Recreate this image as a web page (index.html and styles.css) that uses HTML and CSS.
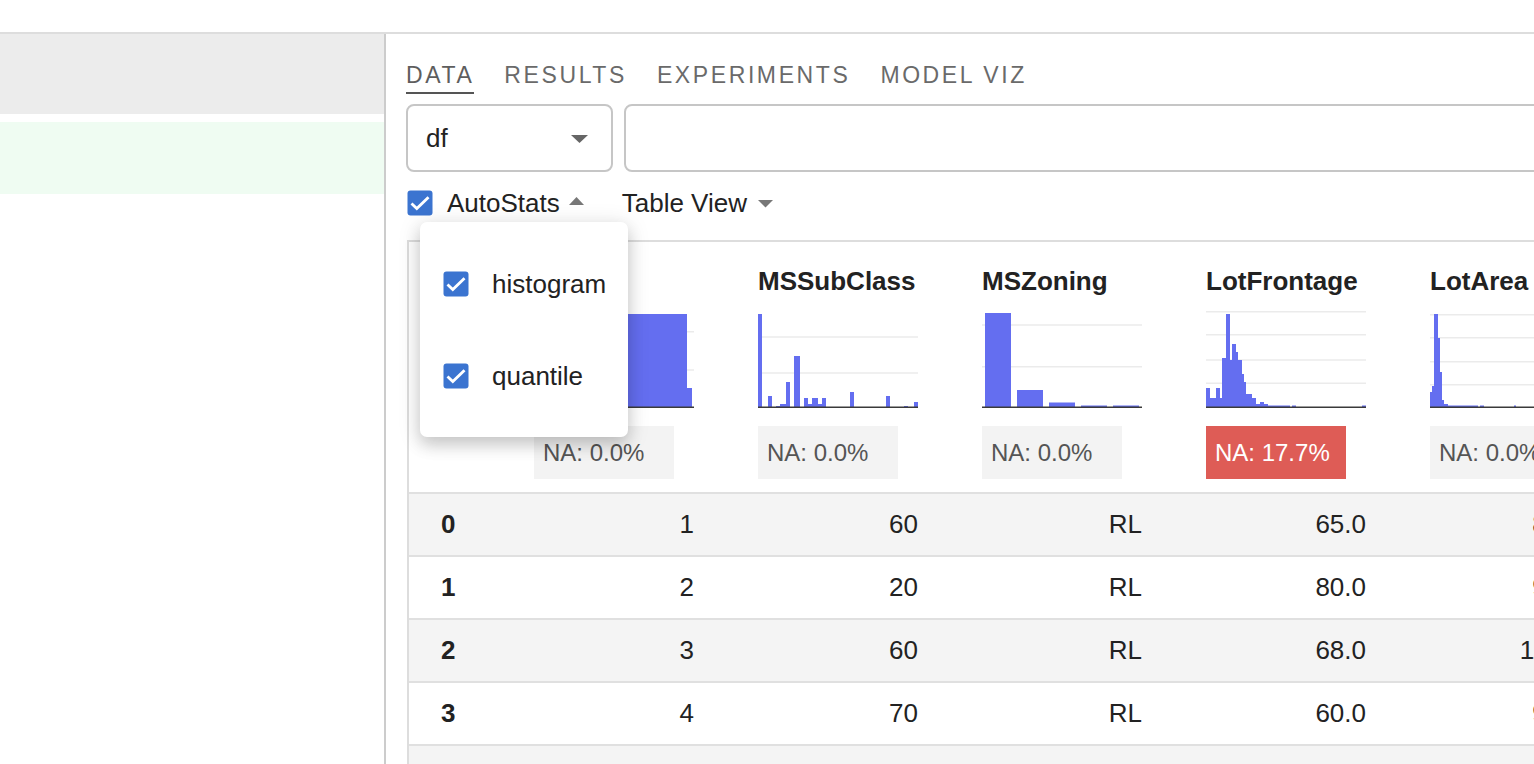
FILE: index.html
```html
<!DOCTYPE html>
<html>
<head>
<meta charset="utf-8">
<link rel="stylesheet" href="styles.css">
</head>
<body>
<div class="topbar"></div>
<div class="main">
  <aside class="left">
    <div class="left-head"></div>
    <div class="left-row"></div>
  </aside>
  <section class="right">
    <nav class="tabs">
      <span class="tab active">DATA</span>
      <span class="tab">RESULTS</span>
      <span class="tab">EXPERIMENTS</span>
      <span class="tab">MODEL VIZ</span>
    </nav>
    <div class="inputs">
      <div class="select">
        <span>df</span>
        <svg class="caret-lg" width="17" height="8" viewBox="0 0 17 8"><polygon points="0,0 17,0 8.5,8" fill="#666"/></svg>
      </div>
      <div class="textbox"></div>
    </div>
    <div class="controls">
      <svg class="cb" width="26" height="26" viewBox="0 0 26 26"><rect x="0.5" y="0.5" width="25" height="25" rx="3" fill="#3b74d0"/><path d="M4.5 13.5 L9.8 18.6 L21.5 7.2" fill="none" stroke="#fff" stroke-width="2.8"/></svg>
      <span class="ctl-label">AutoStats</span>
      <svg class="caret-up" width="15" height="8" viewBox="0 0 15 8"><polygon points="0,8 15,8 7.5,0" fill="#777"/></svg>
      <span class="ctl-label view">Table View</span>
      <svg class="caret-down" width="15" height="8" viewBox="0 0 15 8"><polygon points="0,0 15,0 7.5,7.5" fill="#777"/></svg>
      <div class="popup">
        <div class="pitem">
          <svg width="26" height="26" viewBox="0 0 26 26"><rect x="0.5" y="0.5" width="25" height="25" rx="3" fill="#3b74d0"/><path d="M4.5 13.5 L9.8 18.6 L21.5 7.2" fill="none" stroke="#fff" stroke-width="2.8"/></svg>
          <span>histogram</span>
        </div>
        <div class="pitem">
          <svg width="26" height="26" viewBox="0 0 26 26"><rect x="0.5" y="0.5" width="25" height="25" rx="3" fill="#3b74d0"/><path d="M4.5 13.5 L9.8 18.6 L21.5 7.2" fill="none" stroke="#fff" stroke-width="2.8"/></svg>
          <span>quantile</span>
        </div>
      </div>
    </div>
    <div class="tablewrap">
      <table class="grid">
        <colgroup><col class="c-idx"><col class="c-data"><col class="c-data"><col class="c-data"><col class="c-data"><col class="c-data"></colgroup>
        <thead>
          <tr>
            <th class="hidx"></th>
            <th class="hcol">
              <div class="htitle">Id</div>
              <svg class="hist" width="160" height="97" viewBox="0 0 160 97">
                <line x1="0" y1="20.7" x2="160" y2="20.7" class="gl"/>
                <line x1="0" y1="59" x2="160" y2="59" class="gl"/>
                <rect x="0" y="3" width="153" height="93" class="bar"/>
                <rect x="153" y="77" width="5" height="19" class="bar"/>
                <line x1="0" y1="96.3" x2="160" y2="96.3" class="ax"/>
              </svg>
              <div class="na">NA: 0.0%</div>
            </th>
            <th class="hcol">
              <div class="htitle">MSSubClass</div>
              <svg class="hist" width="160" height="97" viewBox="0 0 160 97">
                <line x1="0" y1="26" x2="160" y2="26" class="gl"/>
                <line x1="0" y1="62" x2="160" y2="62" class="gl"/>
                <rect x="0" y="3" width="4" height="93" class="bar"/>
                <rect x="10" y="85" width="4" height="11" class="bar"/>
                <rect x="18" y="95" width="4" height="1" class="bar"/>
                <rect x="22" y="93" width="6" height="3" class="bar"/>
                <rect x="28" y="71" width="4" height="25" class="bar"/>
                <rect x="36" y="45" width="6" height="51" class="bar"/>
                <rect x="46" y="87" width="4" height="9" class="bar"/>
                <rect x="50" y="93" width="4" height="3" class="bar"/>
                <rect x="54" y="87" width="6" height="9" class="bar"/>
                <rect x="60" y="93" width="4" height="3" class="bar"/>
                <rect x="64" y="87" width="4" height="9" class="bar"/>
                <rect x="92" y="81" width="4" height="15" class="bar"/>
                <rect x="128" y="85" width="4" height="11" class="bar"/>
                <rect x="146" y="95" width="4" height="1" class="bar"/>
                <rect x="156" y="91" width="4" height="5" class="bar"/>
                <line x1="0" y1="96.3" x2="160" y2="96.3" class="ax"/>
              </svg>
              <div class="na">NA: 0.0%</div>
            </th>
            <th class="hcol">
              <div class="htitle">MSZoning</div>
              <svg class="hist" width="160" height="97" viewBox="0 0 160 97">
                <line x1="0" y1="14" x2="160" y2="14" class="gl"/>
                <line x1="0" y1="55.7" x2="160" y2="55.7" class="gl"/>
                <rect x="3" y="2" width="26" height="94" class="bar"/>
                <rect x="35" y="79" width="26" height="17" class="bar"/>
                <rect x="67" y="91.5" width="26" height="4.5" class="bar"/>
                <rect x="99" y="94.5" width="26" height="1.5" class="bar"/>
                <rect x="131" y="94.5" width="26" height="1.5" class="bar"/>
                <line x1="0" y1="96.3" x2="160" y2="96.3" class="ax"/>
              </svg>
              <div class="na">NA: 0.0%</div>
            </th>
            <th class="hcol">
              <div class="htitle">LotFrontage</div>
              <svg class="hist" width="160" height="97" viewBox="0 0 160 97">
                <line x1="0" y1="0.7" x2="160" y2="0.7" class="gl"/>
                <line x1="0" y1="23.7" x2="160" y2="23.7" class="gl"/>
                <line x1="0" y1="49" x2="160" y2="49" class="gl"/>
                <line x1="0" y1="72.3" x2="160" y2="72.3" class="gl"/>
                <rect x="0" y="77" width="4" height="19" class="bar"/>
                <rect x="4" y="87" width="6" height="9" class="bar"/>
                <rect x="10" y="77" width="4" height="19" class="bar"/>
                <rect x="14" y="87" width="2" height="9" class="bar"/>
                <rect x="16" y="47" width="4" height="49" class="bar"/>
                <rect x="20" y="3" width="4" height="93" class="bar"/>
                <rect x="24" y="49" width="2" height="47" class="bar"/>
                <rect x="26" y="33" width="4" height="63" class="bar"/>
                <rect x="30" y="41" width="2" height="55" class="bar"/>
                <rect x="32" y="49" width="4" height="47" class="bar"/>
                <rect x="36" y="63" width="2" height="33" class="bar"/>
                <rect x="38" y="71" width="2" height="25" class="bar"/>
                <rect x="40" y="83" width="6" height="13" class="bar"/>
                <rect x="46" y="87" width="4" height="9" class="bar"/>
                <rect x="50" y="93" width="4" height="3" class="bar"/>
                <rect x="54" y="91" width="4" height="5" class="bar"/>
                <rect x="58" y="93" width="4" height="3" class="bar"/>
                <rect x="62" y="94.5" width="22" height="1.5" class="bar"/>
                <rect x="86" y="94.5" width="4" height="1.5" class="bar"/>
                <rect x="156" y="94.5" width="4" height="1.5" class="bar"/>
                <line x1="0" y1="96.3" x2="160" y2="96.3" class="ax"/>
              </svg>
              <div class="na bad">NA: 17.7%</div>
            </th>
            <th class="hcol">
              <div class="htitle">LotArea</div>
              <svg class="hist" width="160" height="97" viewBox="0 0 160 97">
                <line x1="0" y1="3.7" x2="160" y2="3.7" class="gl"/>
                <line x1="0" y1="26.7" x2="160" y2="26.7" class="gl"/>
                <line x1="0" y1="50.7" x2="160" y2="50.7" class="gl"/>
                <line x1="0" y1="73.7" x2="160" y2="73.7" class="gl"/>
                <rect x="0" y="81" width="2" height="15" class="bar"/>
                <rect x="2" y="75" width="2" height="21" class="bar"/>
                <rect x="4" y="3" width="4" height="93" class="bar"/>
                <rect x="8" y="27" width="2" height="69" class="bar"/>
                <rect x="10" y="61" width="2" height="35" class="bar"/>
                <rect x="12" y="89" width="2" height="7" class="bar"/>
                <rect x="14" y="93" width="4" height="3" class="bar"/>
                <rect x="18" y="94.5" width="30" height="1.5" class="bar"/>
                <rect x="50" y="94.5" width="4" height="1.5" class="bar"/>
                <rect x="84" y="94.5" width="2" height="1.5" class="bar"/>
                <line x1="0" y1="96.3" x2="160" y2="96.3" class="ax"/>
              </svg>
              <div class="na">NA: 0.0%</div>
            </th>
          </tr>
        </thead>
        <tbody>
          <tr class="odd"><th>0</th><td>1</td><td>60</td><td>RL</td><td>65.0</td><td>8450</td></tr>
          <tr><th>1</th><td>2</td><td>20</td><td>RL</td><td>80.0</td><td>9600</td></tr>
          <tr class="odd"><th>2</th><td>3</td><td>60</td><td>RL</td><td>68.0</td><td>11250</td></tr>
          <tr><th>3</th><td>4</td><td>70</td><td>RL</td><td>60.0</td><td>9550</td></tr>
          <tr class="odd"><th>4</th><td>5</td><td>60</td><td>RL</td><td>84.0</td><td>14260</td></tr>
        </tbody>
      </table>
    </div>
  </section>
</div>
</body>
</html>
```

FILE: styles.css
```css
html, body {
  margin: 0;
  padding: 0;
  overflow: hidden;
}
body {
  width: 1534px;
  height: 764px;
  background: #fff;
  font-family: "Liberation Sans", Arial, Helvetica, sans-serif;
  color: #222;
}
.topbar {
  height: 32px;
  border-bottom: 2px solid #dddddd;
}
.main {
  display: flex;
  height: 730px;
}
.left {
  width: 384px;
  flex-shrink: 0;
  border-right: 2px solid #cccccc;
}
.left-head {
  height: 80px;
  background: #ececec;
}
.left-row {
  margin-top: 8px;
  height: 72px;
  background: #effcf2;
}
.right {
  flex: 1;
  min-width: 0;
  padding: 27px 0 0 20px;
}
.tabs {
  display: flex;
  gap: 30px;
}
.tab {
  font-size: 23px;
  line-height: 28px;
  letter-spacing: 2.6px;
  color: #6a6a6a;
  padding-bottom: 3px;
  border-bottom: 2px solid transparent;
}
.tab.active {
  color: #5e5e5e;
  border-bottom-color: #555;
}
.inputs {
  display: flex;
  gap: 11px;
  margin-top: 10px;
}
.select {
  box-sizing: border-box;
  flex-shrink: 0;
  width: 207px;
  height: 68px;
  border: 2px solid #c6c6c6;
  border-radius: 8px;
  display: flex;
  align-items: center;
  justify-content: space-between;
  padding: 0 23px 0 18px;
  font-size: 26px;
  color: #222;
}
.caret-lg {
  margin-top: 2px;
}
.textbox {
  box-sizing: border-box;
  flex-shrink: 0;
  width: 1100px;
  height: 68px;
  border: 2px solid #c6c6c6;
  border-radius: 8px;
}
.controls {
  position: relative;
  display: flex;
  align-items: center;
  height: 26px;
  margin-top: 18px;
  margin-left: 1px;
}
.cb {
  display: block;
}
.ctl-label {
  font-size: 26px;
  line-height: 26px;
  margin-left: 14px;
  color: #222;
}
.ctl-label.view {
  margin-left: 38px;
}
.caret-up {
  margin-left: 9px;
  margin-top: -4px;
}
.caret-down {
  margin-left: 11px;
  margin-top: 1px;
}
.popup {
  position: absolute;
  left: 13px;
  top: 32px;
  z-index: 10;
  box-sizing: border-box;
  width: 208px;
  height: 215px;
  padding: 16px 0 15px;
  background: #fff;
  border-radius: 7px;
  box-shadow: 0 8px 16px rgba(0, 0, 0, 0.16), 0 3px 22px 2px rgba(0, 0, 0, 0.1);
}
.pitem {
  height: 92px;
  display: flex;
  align-items: center;
  gap: 23px;
  padding-left: 23px;
  font-size: 26px;
  color: #222;
}
.pitem svg {
  display: block;
}
.tablewrap {
  margin-top: 24px;
  margin-left: 1px;
  border-top: 2px solid #dddddd;
  border-left: 2px solid #dddddd;
}
.grid {
  table-layout: fixed;
  width: 1213px;
  border-collapse: separate;
  border-spacing: 0;
}
.c-idx {
  width: 93px;
}
.c-data {
  width: 224px;
}
.hcol, .hidx {
  vertical-align: top;
  text-align: left;
  padding: 24px 32px 13px;
  font-weight: normal;
}
.htitle {
  font-size: 26px;
  line-height: 30px;
  font-weight: bold;
  color: #222;
  white-space: nowrap;
}
.hist {
  display: block;
  margin-top: 15px;
  overflow: visible;
}
.hist .bar {
  fill: #646ef0;
}
.hist .gl {
  stroke: #ebebeb;
  stroke-width: 1.6;
}
.hist .ax {
  stroke: #3a3a3a;
  stroke-width: 1.4;
}
.na {
  box-sizing: border-box;
  margin-top: 18px;
  width: 140px;
  height: 53px;
  padding-left: 9px;
  display: flex;
  align-items: center;
  background: #f3f3f3;
  color: #555;
  font-size: 24px;
}
.na.bad {
  background: #de5c56;
  color: #fff;
}
tbody td, tbody th {
  border-top: 2px solid #e0e0e0;
  line-height: 61px;
  font-size: 26px;
  padding: 0 32px;
  white-space: nowrap;
  overflow: hidden;
}
tbody td {
  text-align: right;
  color: #222;
}
tbody th {
  text-align: left;
  font-weight: bold;
  color: #222;
}
tbody tr.odd td, tbody tr.odd th {
  background: #f4f4f4;
}
```
